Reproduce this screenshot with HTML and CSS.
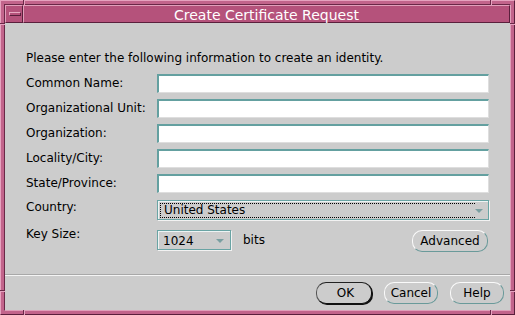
FILE: index.html
```html
<!DOCTYPE html>
<html>
<head>
<meta charset="utf-8">
<link rel="stylesheet" href="styles.css">
</head>
<body>
<div class="window">
  <span class="tick tick-tl-h"></span>
  <span class="tick tick-tr-h"></span>
  <span class="tick tick-bl-h"></span>
  <span class="tick tick-br-h"></span>
  <span class="tick tick-tl-v"></span>
  <span class="tick tick-tr-v"></span>
  <span class="tick tick-bl-v"></span>
  <span class="tick tick-br-v"></span>
  <div class="inner">
    <div class="titlebar">
      <div class="menubtn"><span class="menubar"></span></div>
      <div class="title">Create Certificate Request</div>
    </div>
    <div class="panel">
      <div class="main">
        <p class="intro">Please enter the following information to create an identity.</p>
        <div class="form">
          <label class="lbl">Common Name:</label><div class="field"></div>
          <label class="lbl">Organizational Unit:</label><div class="field"></div>
          <label class="lbl">Organization:</label><div class="field"></div>
          <label class="lbl">Locality/City:</label><div class="field"></div>
          <label class="lbl">State/Province:</label><div class="field"></div>
          <label class="lbl lbl-country">Country:</label>
          <div class="combo combo-wide"><span class="focus">United States</span><span class="arrow"></span></div>
          <label class="lbl lbl-key">Key Size:</label>
          <div class="keyrow">
            <div class="combo combo-key"><span class="val">1024</span><span class="arrow"></span></div>
            <span class="bits">bits</span>
            <button class="btn btn-adv">Advanced</button>
          </div>
        </div>
      </div>
      <div class="separator"></div>
      <div class="buttons">
        <button class="btn btn-ok">OK</button>
        <button class="btn btn-cancel">Cancel</button>
        <button class="btn btn-help">Help</button>
      </div>
    </div>
  </div>
</div>
</body>
</html>
```
FILE: styles.css
```css
* { box-sizing: border-box; }
html, body { margin: 0; padding: 0; }
body {
  width: 515px;
  height: 315px;
  overflow: hidden;
  font-family: "DejaVu Sans", "Liberation Sans", sans-serif;
  font-size: 12px;
  color: #000;
  background: #c4678e;
}
.window {
  position: relative;
  width: 515px;
  height: 315px;
  background: #c2648b;
  border: 1px solid;
  border-color: #e6a3bf #5a1f3c #5a1f3c #e6a3bf;
  padding: 3px;
}
.inner {
  width: 100%;
  height: 100%;
  border: 1px solid;
  border-color: #6a2847 #e0a0ba #e0a0ba #6a2847;
  display: flex;
  flex-direction: column;
}
.tick { position: absolute; display: block; }
.tick-tl-h, .tick-tr-h, .tick-bl-h, .tick-br-h {
  width: 2px; height: 5px;
  border-left: 1px solid #6a2847;
  border-right: 1px solid #e6a3bf;
}
.tick-tl-v, .tick-tr-v, .tick-bl-v, .tick-br-v {
  width: 5px; height: 2px;
  border-top: 1px solid #6a2847;
  border-bottom: 1px solid #e6a3bf;
}
.tick-tl-h { left: 22px; top: -1px; }
.tick-tr-h { left: 489px; top: -1px; }
.tick-bl-h { left: 22px; bottom: -1px; }
.tick-br-h { left: 489px; bottom: -1px; }
.tick-tl-v { left: -1px; top: 22px; }
.tick-tr-v { right: -1px; top: 22px; }
.tick-bl-v { left: -1px; top: 289px; }
.tick-br-v { right: -1px; top: 289px; }

.titlebar {
  height: 18px;
  display: flex;
  flex: none;
  background: #b5527b;
}
.menubtn {
  width: 18px;
  height: 18px;
  border: 1px solid;
  border-color: #e2a0bb #5a1f3c #5a1f3c #e2a0bb;
  padding: 6px 0 0 3px;
}
.menubar {
  display: block;
  width: 12px;
  height: 4px;
  border: 1px solid;
  border-color: #e8aac2 #5a1f3c #5a1f3c #e8aac2;
  background: #b5527b;
}
.title {
  flex: 1;
  height: 18px;
  border: 1px solid;
  border-color: #e2a0bb #5a1f3c #5a1f3c #e2a0bb;
  color: #fff;
  font-size: 14px;
  line-height: 16px;
  text-align: center;
  padding-top: 1px;
  white-space: nowrap;
}
.panel {
  flex: 1;
  background: #cccccc;
  display: flex;
  flex-direction: column;
}
.main {
  flex: 1;
  padding: 28px 20px 0 21px;
}
.intro {
  margin: 0 0 9px 0;
  line-height: 14px;
}
.form {
  display: grid;
  grid-template-columns: 131px 332px;
  row-gap: 6px;
  align-items: start;
}
.lbl {
  line-height: 14px;
  margin-top: 2px;
  white-space: nowrap;
}
.lbl-country { margin-top: 1px; }
.lbl-key { margin-top: 1px; }
.field {
  height: 19px;
  background: #fff;
  border-top: 2px solid #64a0a0;
  border-left: 2px solid #64a0a0;
  border-bottom: 1px solid #dedede;
  border-right: 1px solid #dedede;
}
.combo {
  position: relative;
  height: 20px;
  border: 1px solid #6aa4a4;
  box-shadow: 1px 1px 0 #f2f2f2, inset 1px 1px 0 #eef4f4;
  background: #cccccc;
  line-height: 14px;
}
.combo-wide { width: 332px; margin-top: 1px; }
.focus {
  position: absolute;
  left: 2px;
  top: 2px;
  width: 315px;
  height: 15px;
  border: 1px dotted #000;
  border-right: none;
  padding-left: 3px;
  line-height: 13px;
}
.arrow {
  position: absolute;
  width: 0;
  height: 0;
  border-left: 4px solid transparent;
  border-right: 4px solid transparent;
  border-top: 4px solid #7a9fa1;
}
.combo-wide .arrow { right: 5px; top: 8px; }
.keyrow {
  display: flex;
  align-items: flex-start;
  margin-top: 4px;
  height: 22px;
}
.combo-key { width: 74px; flex: none; }
.val {
  position: absolute;
  left: 5px;
  top: 3px;
}
.combo-key .arrow { right: 6px; top: 8px; }
.bits {
  margin-left: 12px;
  line-height: 14px;
  margin-top: 3px;
}
.btn {
  font-family: "DejaVu Sans", "Liberation Sans", sans-serif;
  font-size: 12px;
  color: #000;
  height: 22px;
  padding: 0;
  line-height: 18px;
  background: #cccccc;
  border: 1px solid;
  border-color: #fafafa #6a9a9a #6a9a9a #fafafa;
  border-radius: 10px;
  text-align: center;
}
.btn-adv { margin-left: auto; width: 76px; margin-right: 1px; }
.separator {
  height: 2px;
  flex: none;
  border-top: 1px solid #a8a8a8;
  border-bottom: 1px solid #f4f4f4;
}
.buttons {
  flex: none;
  height: 34px;
  display: flex;
  justify-content: flex-end;
  padding: 6px 6px 0 0;
  gap: 12px;
}
.btn-ok {
  width: 56px;
  padding-left: 3px;
  border-color: #222 #111 #111 #555;
  box-shadow: 1px 1px 0 #111;
}
.btn-cancel { width: 54px; }
.btn-help { width: 54px; }
```
